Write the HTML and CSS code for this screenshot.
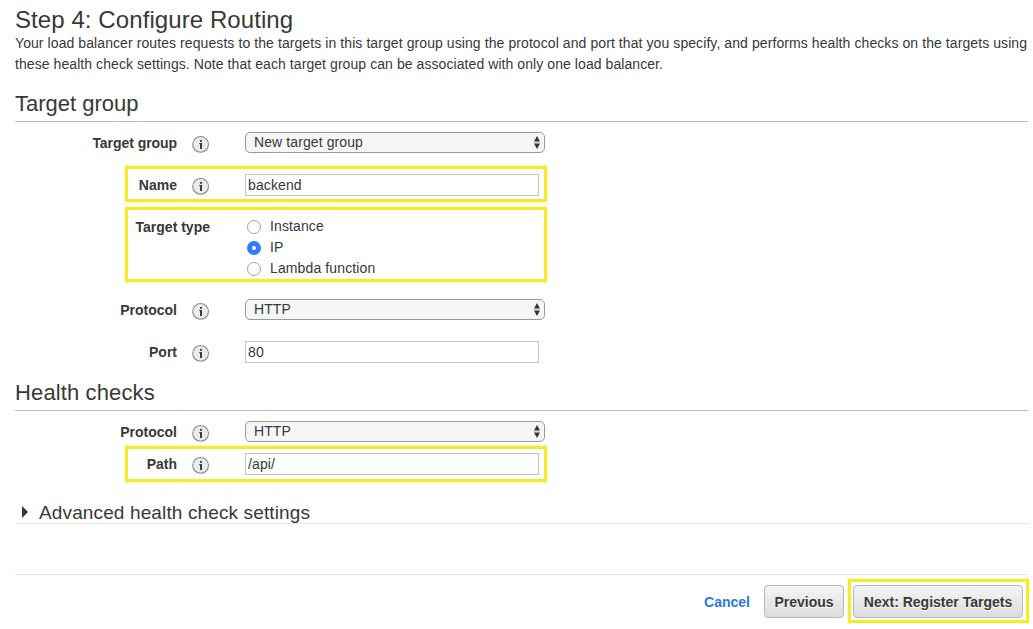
FILE: index.html
```
<!DOCTYPE html>
<html lang="en">
<head>
<meta charset="utf-8">
<title>Step 4: Configure Routing</title>
<link rel="stylesheet" href="styles.css">
</head>
<body>
<svg class="defs" width="0" height="0">
  <symbol id="info" viewBox="0 0 18 18">
    <circle cx="8.6" cy="9.4" r="7.9" fill="#ebebeb" stroke="#8c8c8c" stroke-width="1.1"/>
    <path d="M8 5h2v1.8H8zM7.2 8H10v6H8V9h-.8z" fill="#3c3c3c"/>
  </symbol>
  <symbol id="updown" viewBox="0 0 8 13">
    <path d="M4 0 7 5.4H1zM4 13 1 7.6h6z" fill="#333"/>
    <path d="M.8 6.5h6.4" stroke="#d5d5d5"/>
  </symbol>
</svg>
<main class="page">
  <h1 class="title"><span>Step 4: Configure Routing</span></h1>
  <p class="intro"><span class="intro-a">Your load balancer routes requests to the targets in this target group using the protocol and port that you specify, and performs health checks on the targets using</span><br><span class="intro-b">these health check settings. Note that each target group can be associated with only one load balancer.</span></p>

  <h2 class="section section-target"><span>Target group</span></h2>
  <div class="row">
    <div class="label label-group">Target group</div><svg class="info"><use href="#info"/></svg>
    <div class="select"><span>New target group</span><svg class="arrows"><use href="#updown"/></svg></div>
  </div>
  <div class="row marked">
    <div class="label">Name</div><svg class="info"><use href="#info"/></svg>
    <div class="input">backend</div>
  </div>
  <div class="row row-type marked">
    <div class="label label-type">Target type</div>
    <div class="options">
      <div class="option"><i class="radio"></i>Instance</div>
      <div class="option"><i class="radio checked"></i>IP</div>
      <div class="option"><i class="radio"></i>Lambda function</div>
    </div>
  </div>
  <div class="row">
    <div class="label">Protocol</div><svg class="info"><use href="#info"/></svg>
    <div class="select"><span>HTTP</span><svg class="arrows"><use href="#updown"/></svg></div>
  </div>
  <div class="row">
    <div class="label">Port</div><svg class="info"><use href="#info"/></svg>
    <div class="input">80</div>
  </div>

  <h2 class="section section-health"><span>Health checks</span></h2>
  <div class="health">
    <div class="row">
      <div class="label">Protocol</div><svg class="info"><use href="#info"/></svg>
      <div class="select"><span>HTTP</span><svg class="arrows"><use href="#updown"/></svg></div>
    </div>
    <div class="row marked">
      <div class="label">Path</div><svg class="info"><use href="#info"/></svg>
      <div class="input">/api/</div>
    </div>
  </div>

  <h3 class="advanced"><i class="caret"></i><span>Advanced health check settings</span></h3>

  <footer class="footer">
    <a class="cancel">Cancel</a>
    <div class="button previous">Previous</div>
    <div class="button next marked">Next: Register Targets</div>
  </footer>
</main>
</body>
</html>
```
FILE: styles.css
```
*, *::after { box-sizing: border-box; }
body {
  margin: 0;
  background: #fff;
  color: #383838;
  font: 14px/21px "Liberation Sans", Arial, sans-serif;
}
.defs { position: absolute; }
.page { width: 1028px; min-height: 629px; padding-left: 15px; }
.title, .section, .advanced, .intro { margin: 0; font-weight: 400; white-space: nowrap; }
.title { height: 33px; padding-top: 5px; font-size: 24px; line-height: 30px; letter-spacing: .08px; }
.intro-a { letter-spacing: .083px; }
.intro-b { letter-spacing: .073px; }
.section { border-bottom: 1px solid #bdbdbd; font-size: 22px; line-height: 30px; }
.section-target { height: 47px; padding-top: 14px; }
.section-health { height: 38px; padding-top: 5px; letter-spacing: .13px; }

.row { position: relative; display: flex; align-items: center; height: 42px; }
.label { width: 162px; text-align: right; font-weight: 700; }
.label-group { letter-spacing: -.06px; }
.info { width: 18px; height: 18px; margin: 2px 35px 0 15px; flex: none; }
.row-type { height: 83px; align-items: flex-start; padding-top: 10px; }
.label-type { width: 195px; padding-top: 1px; margin-right: 37px; }
.options { display: flex; flex-direction: column; }
.option { display: flex; align-items: center; height: 21px; gap: 9px; letter-spacing: .12px; }
.radio { width: 14px; height: 14px; border: 1px solid #a3a3a3; border-radius: 50%; background: #fff; margin-top: 1px; }
.radio.checked { border: 5px solid #347df7; }
.select {
  display: flex; align-items: center; justify-content: space-between;
  width: 300px; height: 21px; margin-bottom: 2px; padding: 0 3px 0 8px;
  border: 1px solid #999; border-radius: 5px; background: #f6f6f6; letter-spacing: .1px;
}
.arrows { width: 8px; height: 13px; }
.input { width: 294px; height: 22px; padding-left: 2px; border: 1px solid #c3c3c3; line-height: 20px; letter-spacing: .12px; }

.marked::after {
  content: ""; position: absolute; left: 110px; top: 2px; width: 422px; height: 36px;
  border: 3px solid #f5ea2d; box-shadow: 0 0 0 1px #fffbc4;
}
.row-type.marked::after { top: 1px; height: 75px; }

.health { padding-top: 5px; }
.health .row { height: 32px; }
.health .marked::after { top: -2px; }

.advanced {
  display: flex; align-items: center; height: 44px; padding: 22px 0 0 7px;
  border-bottom: 1px solid #e6e6e6; font-size: 19px; line-height: 22px; letter-spacing: .13px;
}
.caret { border: solid transparent; border-width: 6px 0 6px 6px; border-left-color: #333; margin: -2px 11px 0 0; }

.footer {
  display: flex; align-items: flex-start; justify-content: flex-end; margin-top: 50px; padding: 10px 5px 0 0;
  border-top: 1px solid #e6e6e6; font-weight: 700; line-height: 34px; white-space: nowrap;
}
.cancel { color: #2a7bde; margin-right: 14px; }
.button {
  height: 33px; border: 1px solid #b8b8b8; border-radius: 4px; line-height: 32px; text-align: center;
  background: linear-gradient(#f5f5f5, #dcdcdc); text-shadow: 0 1px 0 #fff;
}
.previous { width: 80px; margin-right: 9px; }
.next { position: relative; width: 170px; }
.next.marked::after { left: -6px; top: -7px; width: 181px; height: 44px; }
```
